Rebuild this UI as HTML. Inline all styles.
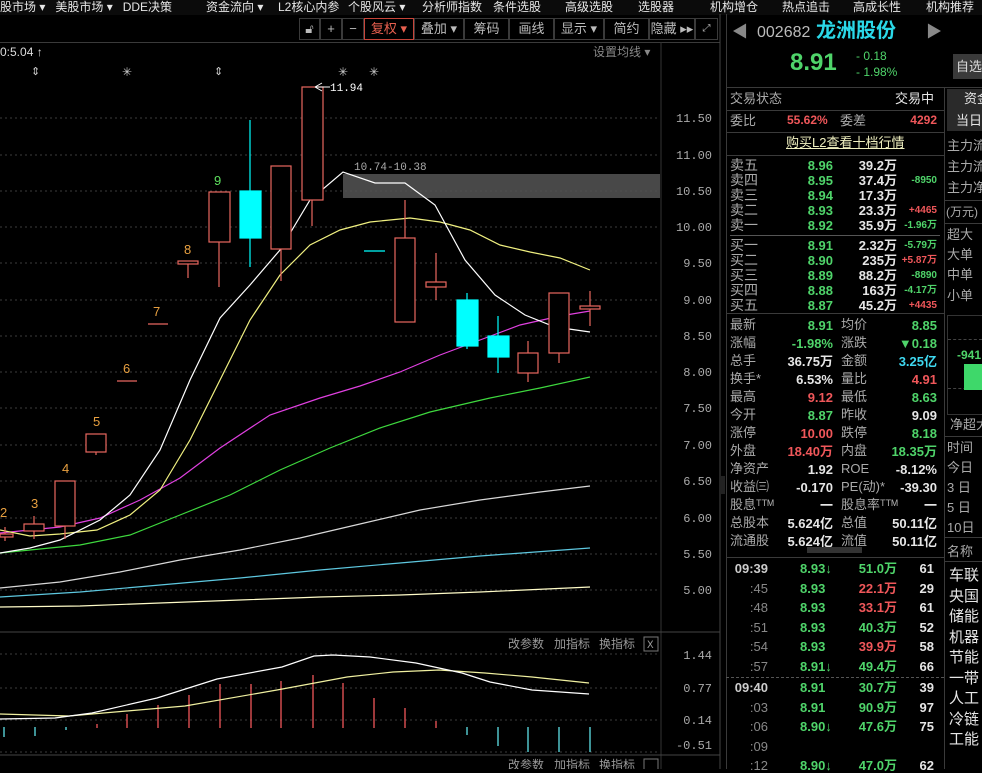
<!DOCTYPE html>
<html><head><meta charset="utf-8">
<style>
*{margin:0;padding:0;box-sizing:border-box}
body{width:982px;height:769px;background:#000;overflow:hidden;position:relative;font-family:"Liberation Sans","Noto Sans CJK SC",sans-serif;color:#c8c8c8;font-size:13px}
.a{position:absolute;white-space:nowrap;line-height:1}
.g{color:#4fd46a}.r{color:#f0575a}.w{color:#e6e6e6}.c{color:#3fd8f0}
.hl{position:absolute;height:1px;background:#3a3a3a}
.vl{position:absolute;width:1px;background:#3a3a3a}
.rt{text-align:right}
.b{font-weight:bold}
.tb{position:absolute;top:18px;height:22px;border:1px solid #3a3a3a;color:#bbb;font-size:13px;line-height:20px;text-align:center}
</style></head><body>
<!-- top menu -->
<div class="a" style="top:0;left:0;width:982px;height:15px;background:#0b0b0b"></div>
<div class="a w" style="top:1px;left:0;font-size:12px;word-spacing:0">股市场 ▾&nbsp;&nbsp;&nbsp;美股市场 ▾&nbsp;&nbsp;&nbsp;DDE决策</div>
<div class="a w" style="top:1px;left:206px;font-size:12px">资金流向 ▾</div>
<div class="a w" style="top:1px;left:278px;font-size:12px">L2核心内参</div>
<div class="a w" style="top:1px;left:348px;font-size:12px">个股风云 ▾</div>
<div class="a w" style="top:1px;left:422px;font-size:12px">分析师指数</div>
<div class="a w" style="top:1px;left:493px;font-size:12px">条件选股</div>
<div class="a w" style="top:1px;left:565px;font-size:12px">高级选股</div>
<div class="a w" style="top:1px;left:638px;font-size:12px">选股器</div>
<div class="a w" style="top:1px;left:710px;font-size:12px">机构增仓</div>
<div class="a w" style="top:1px;left:782px;font-size:12px">热点追击</div>
<div class="a w" style="top:1px;left:853px;font-size:12px">高成长性</div>
<div class="a w" style="top:1px;left:926px;font-size:12px">机构推荐</div>
<!-- toolbar -->
<div class="tb" style="left:299px;width:21px">🔓︎</div>
<div class="tb" style="left:320px;width:22px">+</div>
<div class="tb" style="left:342px;width:22px">−</div>
<div class="tb" style="left:364px;width:50px;border-color:#c8453a;color:#e8604f">复权 ▾</div>
<div class="tb" style="left:414px;width:50px">叠加 ▾</div>
<div class="tb" style="left:464px;width:45px">筹码</div>
<div class="tb" style="left:509px;width:45px">画线</div>
<div class="tb" style="left:554px;width:50px">显示 ▾</div>
<div class="tb" style="left:604px;width:45px">简约</div>
<div class="tb" style="left:649px;width:46px">隐藏 ▸▸</div>
<div class="tb" style="left:695px;width:23px;font-size:10px">⤢</div>
<div class="hl" style="top:42px;left:0;width:720px"></div>
<div class="a" style="top:46px;left:0;font-size:12px;color:#ddd">0:5.04 ↑</div>
<div class="a" style="top:46px;left:593px;font-size:12px;color:#888">设置均线 ▾</div>
<div class="a" style="top:67px;left:31px;color:#ccc;font-size:11px">⇕</div>
<div class="a" style="top:67px;left:214px;color:#ccc;font-size:11px">⇕</div>
<div class="a" style="top:66px;left:122px;color:#ccc;font-size:12px">✳</div>
<div class="a" style="top:66px;left:338px;color:#ccc;font-size:12px">✳</div>
<div class="a" style="top:66px;left:369px;color:#ccc;font-size:12px">✳</div>

<svg class="a" style="left:0;top:0" width="725" height="769" font-family="Liberation Mono, monospace">
<g stroke="#3c3c3c" stroke-dasharray="2 3">
<line x1="0" x2="660" y1="118" y2="118"/><line x1="0" x2="660" y1="155" y2="155"/><line x1="0" x2="660" y1="191" y2="191"/><line x1="0" x2="660" y1="227" y2="227"/><line x1="0" x2="660" y1="263" y2="263"/><line x1="0" x2="660" y1="300" y2="300"/><line x1="0" x2="660" y1="336" y2="336"/><line x1="0" x2="660" y1="372" y2="372"/><line x1="0" x2="660" y1="408" y2="408"/><line x1="0" x2="660" y1="445" y2="445"/><line x1="0" x2="660" y1="481" y2="481"/><line x1="0" x2="660" y1="518" y2="518"/><line x1="0" x2="660" y1="554" y2="554"/><line x1="0" x2="660" y1="590" y2="590"/>
<line x1="0" x2="660" y1="654" y2="654"/><line x1="0" x2="660" y1="688" y2="688"/><line x1="0" x2="660" y1="720" y2="720"/><line x1="0" x2="660" y1="752" y2="752"/>
</g>
<line x1="661" y1="42" x2="661" y2="769" stroke="#333"/>
<line x1="720" y1="14" x2="720" y2="769" stroke="#444"/>
<line x1="0" y1="632" x2="720" y2="632" stroke="#444"/>
<line x1="0" y1="755" x2="720" y2="755" stroke="#444"/>
<g fill="#aaa" font-size="12" text-anchor="end">
<text x="712" y="122">11.50</text><text x="712" y="159">11.00</text><text x="712" y="195">10.50</text><text x="712" y="231">10.00</text><text x="712" y="267">9.50</text><text x="712" y="304">9.00</text><text x="712" y="340">8.50</text><text x="712" y="376">8.00</text><text x="712" y="412">7.50</text><text x="712" y="449">7.00</text><text x="712" y="485">6.50</text><text x="712" y="522">6.00</text><text x="712" y="558">5.50</text><text x="712" y="594">5.00</text>
<text x="712" y="659">1.44</text><text x="712" y="692">0.77</text><text x="712" y="724">0.14</text><text x="712" y="749">-0.51</text>
</g>
<rect x="343" y="174" width="317" height="24" fill="#555" opacity="0.85"/>
<text x="354" y="170" fill="#aaa" font-size="11">10.74-10.38</text>
<!-- MA lines -->
<g fill="none" stroke-width="1.2">
<polyline stroke="#fffcc8" points="0,607 80,606 160,603 240,600 320,597 400,595 480,592 590,587"/>
<polyline stroke="#5ec8e0" points="0,597 80,592 160,585 240,578 320,570 400,563 480,556 590,548"/>
<polyline stroke="#d8d8d8" points="0,588 60,582 120,572 180,560 240,550 300,538 360,524 420,510 480,500 540,492 590,486"/>
<polyline stroke="#3ed83e" points="0,553 30,550 80,545 130,535 180,515 230,495 280,470 330,448 380,428 430,412 490,398 540,388 590,377"/>
<polyline stroke="#e040e0" points="0,533 30,530 60,527 100,518 140,500 180,478 220,448 270,415 320,398 360,386 400,372 440,355 480,340 520,325 560,316 590,311"/>
<polyline stroke="#f0f080" points="0,530 30,536 60,534 97,530 130,515 160,490 190,440 220,380 250,320 280,275 310,245 340,230 370,222 410,218 440,222 470,230 500,245 530,252 560,258 590,270"/>
<polyline stroke="#fff" points="0,553 30,548 60,540 100,520 130,495 160,450 190,380 220,318 250,285 280,250 310,200 343,172 375,183 405,183 435,205 465,260 495,295 525,315 555,327 590,332"/>
</g>
<!-- candles -->
<g stroke="#e8675f" fill="#000" stroke-width="1.2">
<line x1="5" y1="527" x2="5" y2="541"/><rect x="0" y="534" width="13" height="3"/>
<line x1="34" y1="516" x2="34" y2="539"/><rect x="24" y="524" width="20" height="7"/>
<line x1="65" y1="526" x2="65" y2="539"/><rect x="55" y="481" width="20" height="45"/>
<line x1="96" y1="452" x2="96" y2="455"/><rect x="86" y="434" width="20" height="18"/>
<line x1="117" y1="381" x2="137" y2="381"/>
<line x1="148" y1="324" x2="168" y2="324"/>
<line x1="188" y1="264" x2="188" y2="278"/><rect x="178" y="261" width="20" height="3"/>
<line x1="219" y1="242" x2="219" y2="287"/><rect x="209" y="192" width="21" height="50"/>
<line x1="281" y1="249" x2="281" y2="281"/><rect x="271" y="166" width="20" height="83"/>
<line x1="312" y1="200" x2="312" y2="226"/><rect x="302" y="87" width="21" height="113"/>
<line x1="405" y1="200" x2="405" y2="238"/><rect x="395" y="238" width="20" height="84"/>
<line x1="436" y1="253" x2="436" y2="300"/><rect x="426" y="282" width="20" height="5"/>
<line x1="528" y1="341" x2="528" y2="382"/><rect x="518" y="353" width="20" height="20"/>
<line x1="559" y1="353" x2="559" y2="363"/><rect x="549" y="293" width="20" height="60"/>
<line x1="590" y1="291" x2="590" y2="326"/><rect x="580" y="306" width="20" height="3"/>
</g>
<g stroke="#00ffff" fill="#00ffff" stroke-width="1.2">
<line x1="250" y1="120" x2="250" y2="267"/><rect x="240" y="191" width="21" height="47"/>
<line x1="364" y1="251" x2="385" y2="251"/>
<line x1="467" y1="293" x2="467" y2="349"/><rect x="457" y="300" width="21" height="46"/>
<line x1="498" y1="316" x2="498" y2="373"/><rect x="488" y="336" width="21" height="21"/>
</g>
<g fill="#e8a040" font-size="13" font-family="Liberation Sans,sans-serif">
<text x="0" y="517">2</text><text x="31" y="508">3</text><text x="62" y="473">4</text><text x="93" y="426">5</text><text x="123" y="373">6</text><text x="153" y="316">7</text><text x="184" y="254">8</text>
</g>
<text x="214" y="185" fill="#5ee05e" font-size="13" font-family="Liberation Sans,sans-serif">9</text>
<path d="M315 87 L322 83 M315 87 L322 91 M315 87 H330" stroke="#fff" fill="none"/>
<text x="330" y="91" fill="#fff" font-size="11">11.94</text>
<!-- MACD -->
<g stroke="#f0575a" stroke-width="1.3">
<line x1="97" x2="97" y1="728" y2="724"/><line x1="127" x2="127" y1="728" y2="714"/><line x1="158" x2="158" y1="728" y2="705"/><line x1="189" x2="189" y1="728" y2="695"/><line x1="220" x2="220" y1="728" y2="684"/><line x1="251" x2="251" y1="728" y2="684"/><line x1="281" x2="281" y1="728" y2="681"/><line x1="313" x2="313" y1="728" y2="675"/><line x1="343" x2="343" y1="728" y2="683"/><line x1="374" x2="374" y1="728" y2="698"/><line x1="405" x2="405" y1="728" y2="708"/><line x1="436" x2="436" y1="728" y2="721"/>
</g>
<g stroke="#5ee0e8" stroke-width="1.3">
<line x1="4" x2="4" y1="727" y2="737"/><line x1="35" x2="35" y1="727" y2="736"/><line x1="66" x2="66" y1="727" y2="730"/>
<line x1="467" x2="467" y1="727" y2="735"/><line x1="498" x2="498" y1="727" y2="746"/><line x1="528" x2="528" y1="727" y2="752"/><line x1="559" x2="559" y1="727" y2="752"/><line x1="590" x2="590" y1="727" y2="752"/>
</g>
<polyline fill="none" stroke="#f0f0a0" stroke-width="1.2" points="0,714 69,716 185,706 277,690 347,677 393,672 439,670 485,673 532,677 589,683"/>
<polyline fill="none" stroke="#fff" stroke-width="1.2" points="0,719 55,718 92,713 157,698 217,679 282,667 314,656 333,655 370,657 416,663 462,673 490,682 532,690 589,694"/>
<g fill="#999" font-size="12" font-family="Liberation Sans,Noto Sans CJK SC,sans-serif">
<text x="508" y="648">改参数</text><text x="554" y="648">加指标</text><text x="599" y="648">换指标</text>
<text x="508" y="769">改参数</text><text x="554" y="769">加指标</text><text x="599" y="769">换指标</text>
</g>
<rect x="644" y="637" width="14" height="14" fill="none" stroke="#777"/><text x="647" y="648" fill="#999" font-size="11">X</text>
<rect x="644" y="759" width="14" height="14" fill="none" stroke="#777"/>
<rect x="720" y="476" width="5" height="18" fill="#222"/>
</svg>

<!-- right panel -->
<div class="vl" style="left:726px;top:14px;height:755px"></div>
<div class="vl" style="left:944px;top:88px;height:681px"></div>
<div class="a" style="top:25px;left:732px;color:#888;font-size:16px">◀</div>
<div class="a" style="top:25px;left:926px;color:#888;font-size:16px">▶</div>
<div class="a" style="top:25px;left:757px;color:#bbb;font-size:16px">002682</div>
<div class="a c b" style="top:21px;left:816px;font-size:20px;color:#2ad8e8">龙洲股份</div>
<div class="a g b" style="top:51px;left:790px;font-size:24px">8.91</div>
<div class="a g" style="top:50px;left:856px;font-size:12px">- 0.18</div>
<div class="a g" style="top:66px;left:856px;font-size:12px">- 1.98%</div>
<div class="a" style="top:54px;left:953px;width:29px;height:25px;background:#3a3a3a;color:#ddd;font-size:13px;line-height:25px;padding-left:3px">自选</div>
<div class="hl" style="top:87px;left:726px;width:256px"></div>
<div class="a" style="top:92px;left:730px;color:#aaa">交易状态</div>
<div class="a w" style="top:92px;left:895px">交易中</div>
<div class="hl" style="top:110px;left:726px;width:218px"></div>
<div class="a" style="top:114px;left:730px;color:#aaa">委比</div>
<div class="a r b" style="top:114px;left:787px;font-size:12px">55.62%</div>
<div class="a" style="top:114px;left:840px;color:#aaa">委差</div>
<div class="a r b rt" style="top:114px;left:880px;width:57px;font-size:12px">4292</div>
<div class="hl" style="top:132px;left:726px;width:218px"></div>
<div class="a" style="top:136px;left:786px;color:#f0f0c0;text-decoration:underline">购买L2查看十档行情</div>
<div class="hl" style="top:155px;left:726px;width:218px"></div>
<div id="ob"></div>
<div class="hl" style="top:235px;left:730px;width:210px;background:#555"></div>
<div class="hl" style="top:313px;left:726px;width:218px"></div>
<div id="st"></div>
<div class="a" style="top:547px;left:807px;width:55px;height:6px;background:#333"></div>
<div class="hl" style="top:557px;left:726px;width:218px"></div>
<div id="tk"></div>
<div class="a" style="top:677px;left:726px;width:218px;border-top:1px dashed #555"></div>
<!-- far right column -->
<div class="a" style="top:89px;left:947px;width:35px;height:42px;background:#2a2a2a"></div>
<div class="a w" style="top:92px;left:964px">资金</div>
<div class="a w" style="top:114px;left:956px">当日</div>
<div class="a" style="top:139px;left:947px;color:#aaa">主力流</div>
<div class="a" style="top:160px;left:947px;color:#aaa">主力流</div>
<div class="a" style="top:181px;left:947px;color:#aaa">主力净</div>
<div class="hl" style="top:200px;left:944px;width:38px"></div>
<div class="a" style="top:206px;left:946px;color:#aaa;font-size:12px">(万元)</div>
<div class="hl" style="top:223px;left:944px;width:38px"></div>
<div class="a" style="top:228px;left:947px;color:#aaa">超大</div>
<div class="a" style="top:248px;left:947px;color:#aaa">大单</div>
<div class="a" style="top:268px;left:947px;color:#aaa">中单</div>
<div class="a" style="top:289px;left:947px;color:#aaa">小单</div>
<div class="a" style="top:315px;left:947px;width:35px;height:100px;border:1px solid #333;border-right:none"></div>
<div class="a" style="top:339px;left:948px;width:34px;border-top:1px dashed #444"></div>
<div class="a" style="top:388px;left:948px;width:34px;border-top:1px dashed #444"></div>
<div class="a g b" style="top:349px;left:957px;font-size:12px">-941</div>
<div class="a" style="top:364px;left:964px;width:18px;height:26px;background:#3ed86a"></div>
<div class="a" style="top:418px;left:950px;color:#aaa">净超大</div>
<div class="hl" style="top:436px;left:944px;width:38px"></div>
<div class="a" style="top:441px;left:947px;color:#aaa">时间</div>
<div class="a" style="top:461px;left:947px;color:#aaa">今日</div>
<div class="a" style="top:481px;left:947px;color:#aaa">3 日</div>
<div class="a" style="top:501px;left:947px;color:#aaa">5 日</div>
<div class="a" style="top:521px;left:947px;color:#aaa">10日</div>
<div class="hl" style="top:537px;left:944px;width:38px"></div>
<div class="a" style="top:545px;left:947px;color:#aaa">名称</div>
<div class="hl" style="top:561px;left:944px;width:38px"></div>
<div class="a w" style="top:566px;left:949px;font-size:15px;line-height:20.5px;white-space:normal;width:33px;overflow:hidden">车联<br>央国<br>储能<br>机器<br>节能<br>一带<br>人工<br>冷链<br>工能</div>
<script>
var ob=[["卖五","8.96","39.2万",""],["卖四","8.95","37.4万","-8950"],["卖三","8.94","17.3万",""],["卖二","8.93","23.3万","+4465"],["卖一","8.92","35.9万","-1.96万"],
["买一","8.91","2.32万","-5.79万"],["买二","8.90","235万","+5.87万"],["买三","8.89","88.2万","-8890"],["买四","8.88","163万","-4.17万"],["买五","8.87","45.2万","+4435"]];
var h="";ob.forEach(function(r,i){var y=(i<5?158+i*15:238+(i-5)*15);
h+='<div class="a" style="top:'+y+'px;left:730px;color:#aaa;font-size:14px">'+r[0]+'</div>';
h+='<div class="a g b rt" style="top:'+(y+1)+'px;left:780px;width:53px;font-size:13px">'+r[1]+'</div>';
h+='<div class="a w b rt" style="top:'+(y+1)+'px;left:840px;width:57px;font-size:13px">'+r[2]+'</div>';
if(r[3])h+='<div class="a b rt '+(r[3][0]=="+"?"r":"g")+'" style="top:'+(y+3)+'px;left:890px;width:47px;font-size:10px">'+r[3]+'</div>';});
document.getElementById("ob").outerHTML=h;
var st=[["最新","8.91","g","均价","8.85","g"],["涨幅","-1.98%","g","涨跌","▼0.18","g"],["总手","36.75万","w","金额","3.25亿","c"],["换手*","6.53%","w","量比","4.91","r"],["最高","9.12","r","最低","8.63","g"],["今开","8.87","g","昨收","9.09","w"],["涨停","10.00","r","跌停","8.18","g"],["外盘","18.40万","r","内盘","18.35万","g"],["净资产","1.92","w","ROE","-8.12%","w"],["收益㈢","-0.170","w","PE(动)*","-39.30","w"],["股息ᵀᵀᴹ","一","w","股息率ᵀᵀᴹ","一","w"],["总股本","5.624亿","w","总值","50.11亿","w"],["流通股","5.624亿","w","流值","50.11亿","w"]];
h="";st.forEach(function(r,i){var y=318+i*18;
h+='<div class="a" style="top:'+y+'px;left:730px;color:#aaa">'+r[0]+'</div>';
h+='<div class="a b rt '+r[2]+'" style="top:'+(y+1)+'px;left:770px;width:63px">'+r[1]+'</div>';
h+='<div class="a" style="top:'+y+'px;left:841px;color:#aaa">'+r[3]+'</div>';
h+='<div class="a b rt '+r[5]+'" style="top:'+(y+1)+'px;left:877px;width:60px">'+r[4]+'</div>';});
document.getElementById("st").outerHTML=h;
var tk=[["09:39","8.93↓","51.0万","g","61"],[":45","8.93","22.1万","r","29"],[":48","8.93","33.1万","r","61"],[":51","8.93","40.3万","g","52"],[":54","8.93","39.9万","r","58"],[":57","8.91↓","49.4万","g","66"],["09:40","8.91","30.7万","g","39"],[":03","8.91","90.9万","g","97"],[":06","8.90↓","47.6万","g","75"],[":09","","","g",""],[":12","8.90↓","47.0万","g","62"]];
h="";tk.forEach(function(r,i){var y=(i<6?562+i*19.6:681+(i-6)*19.6);
h+='<div class="a rt" style="top:'+y+'px;left:730px;width:38px;color:'+(r[0].length>3?"#ccc;font-weight:bold":"#888")+'">'+r[0]+'</div>';
h+='<div class="a g b" style="top:'+y+'px;left:800px">'+r[1]+'</div>';
h+='<div class="a b rt '+r[3]+'" style="top:'+y+'px;left:840px;width:57px">'+r[2]+'</div>';
h+='<div class="a w b rt" style="top:'+y+'px;left:900px;width:34px">'+r[4]+'</div>';});
document.getElementById("tk").outerHTML=h;
</script>
</body></html>
